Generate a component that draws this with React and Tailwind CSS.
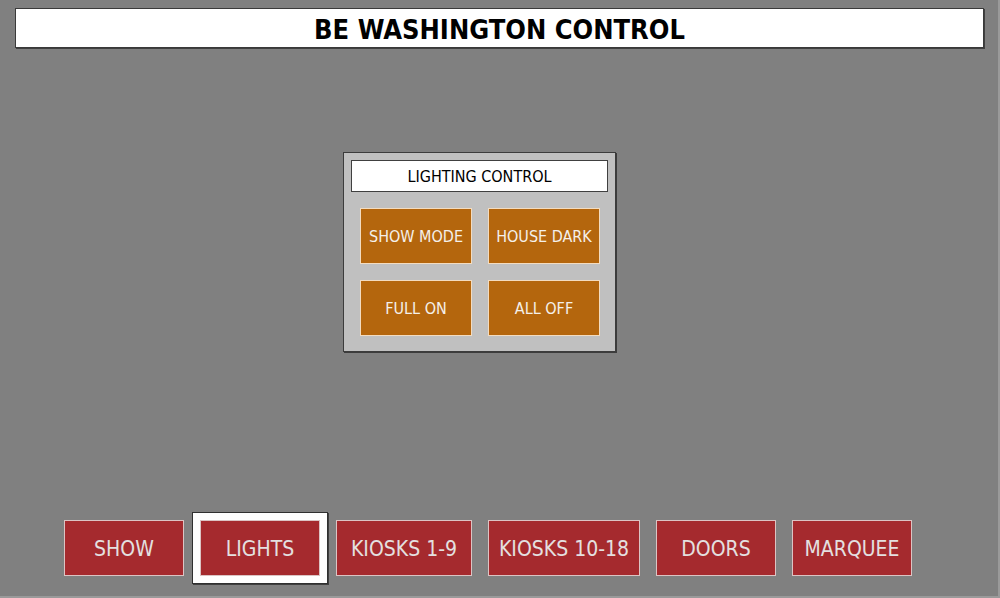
import React from 'react';

const font = { fontFamily: '"DejaVu Sans Condensed", "DejaVu Sans", sans-serif', fontStretch: 'condensed' };

const lightingButtons = ['SHOW MODE', 'HOUSE DARK', 'FULL ON', 'ALL OFF'];

const navItems = [
  { label: 'SHOW', width: 'w-[120px]' },
  { label: 'LIGHTS', width: 'w-[120px]', active: true },
  { label: 'KIOSKS 1-9', width: 'w-[136px]' },
  { label: 'KIOSKS 10-18', width: 'w-[152px]', extra: 'ml-2' },
  { label: 'DOORS', width: 'w-[120px]', extra: 'ml-2' },
  { label: 'MARQUEE', width: 'w-[120px]', extra: 'ml-2' },
];

const NavButton = ({ item }) => {
  const btn = (
    <button
      className={`${item.width} h-[56px] pt-[3px] bg-[#a52a2e] border border-[#dcc4c4] text-[#e4e0e0] text-[21px] flex items-center justify-center`}
      style={font}
    >
      {item.label}
    </button>
  );
  if (item.active) {
    return (
      <div className="p-[7px] bg-white border border-[#303030] shadow-[1px_1px_0_#404040]">
        {btn}
      </div>
    );
  }
  return <div className={item.extra || ''}>{btn}</div>;
};

export default function App() {
  return (
    <div className="w-[1000px] h-[598px] bg-[#808080] flex flex-col border-r-2 border-b-2 border-[#9a9a9a] overflow-hidden" style={font}>
      {/* Header */}
      <div className="mt-[8px] ml-[15px] w-[969px] h-[40px] pt-[2px] bg-white border border-[#3a3a3a] shadow-[1px_1px_0_#404040] flex items-center justify-center">
        <h1 className="text-[27px] font-bold text-black leading-none" style={font}>BE WASHINGTON CONTROL</h1>
      </div>

      {/* Lighting panel */}
      <div className="mt-[104px] ml-[343px] w-[273px] h-[200px] bg-[#c0c0c0] border border-[#3c3c3c] shadow-[1px_1px_0_#3c3c3c] pt-[7px] px-[7px]">
        <div className="w-[257px] h-[32px] pt-[2px] bg-white border border-[#404040] flex items-center justify-center text-[16px] text-black">
          LIGHTING CONTROL
        </div>
        <div className="grid grid-cols-2 gap-4 w-[240px] ml-[9px] mt-[16px]">
          {lightingButtons.map((label) => (
            <button
              key={label}
              className="h-[56px] pt-[2px] bg-[#b4660d] border border-[#f3dcc0] text-[#f4f0ea] text-[16px] flex items-center justify-center"
              style={font}
            >
              {label}
            </button>
          ))}
        </div>
      </div>

      {/* Bottom navigation */}
      <div className="mt-auto mb-[12px] ml-[64px] flex items-center gap-2">
        {navItems.map((item) => (
          <NavButton key={item.label} item={item} />
        ))}
      </div>
    </div>
  );
}
